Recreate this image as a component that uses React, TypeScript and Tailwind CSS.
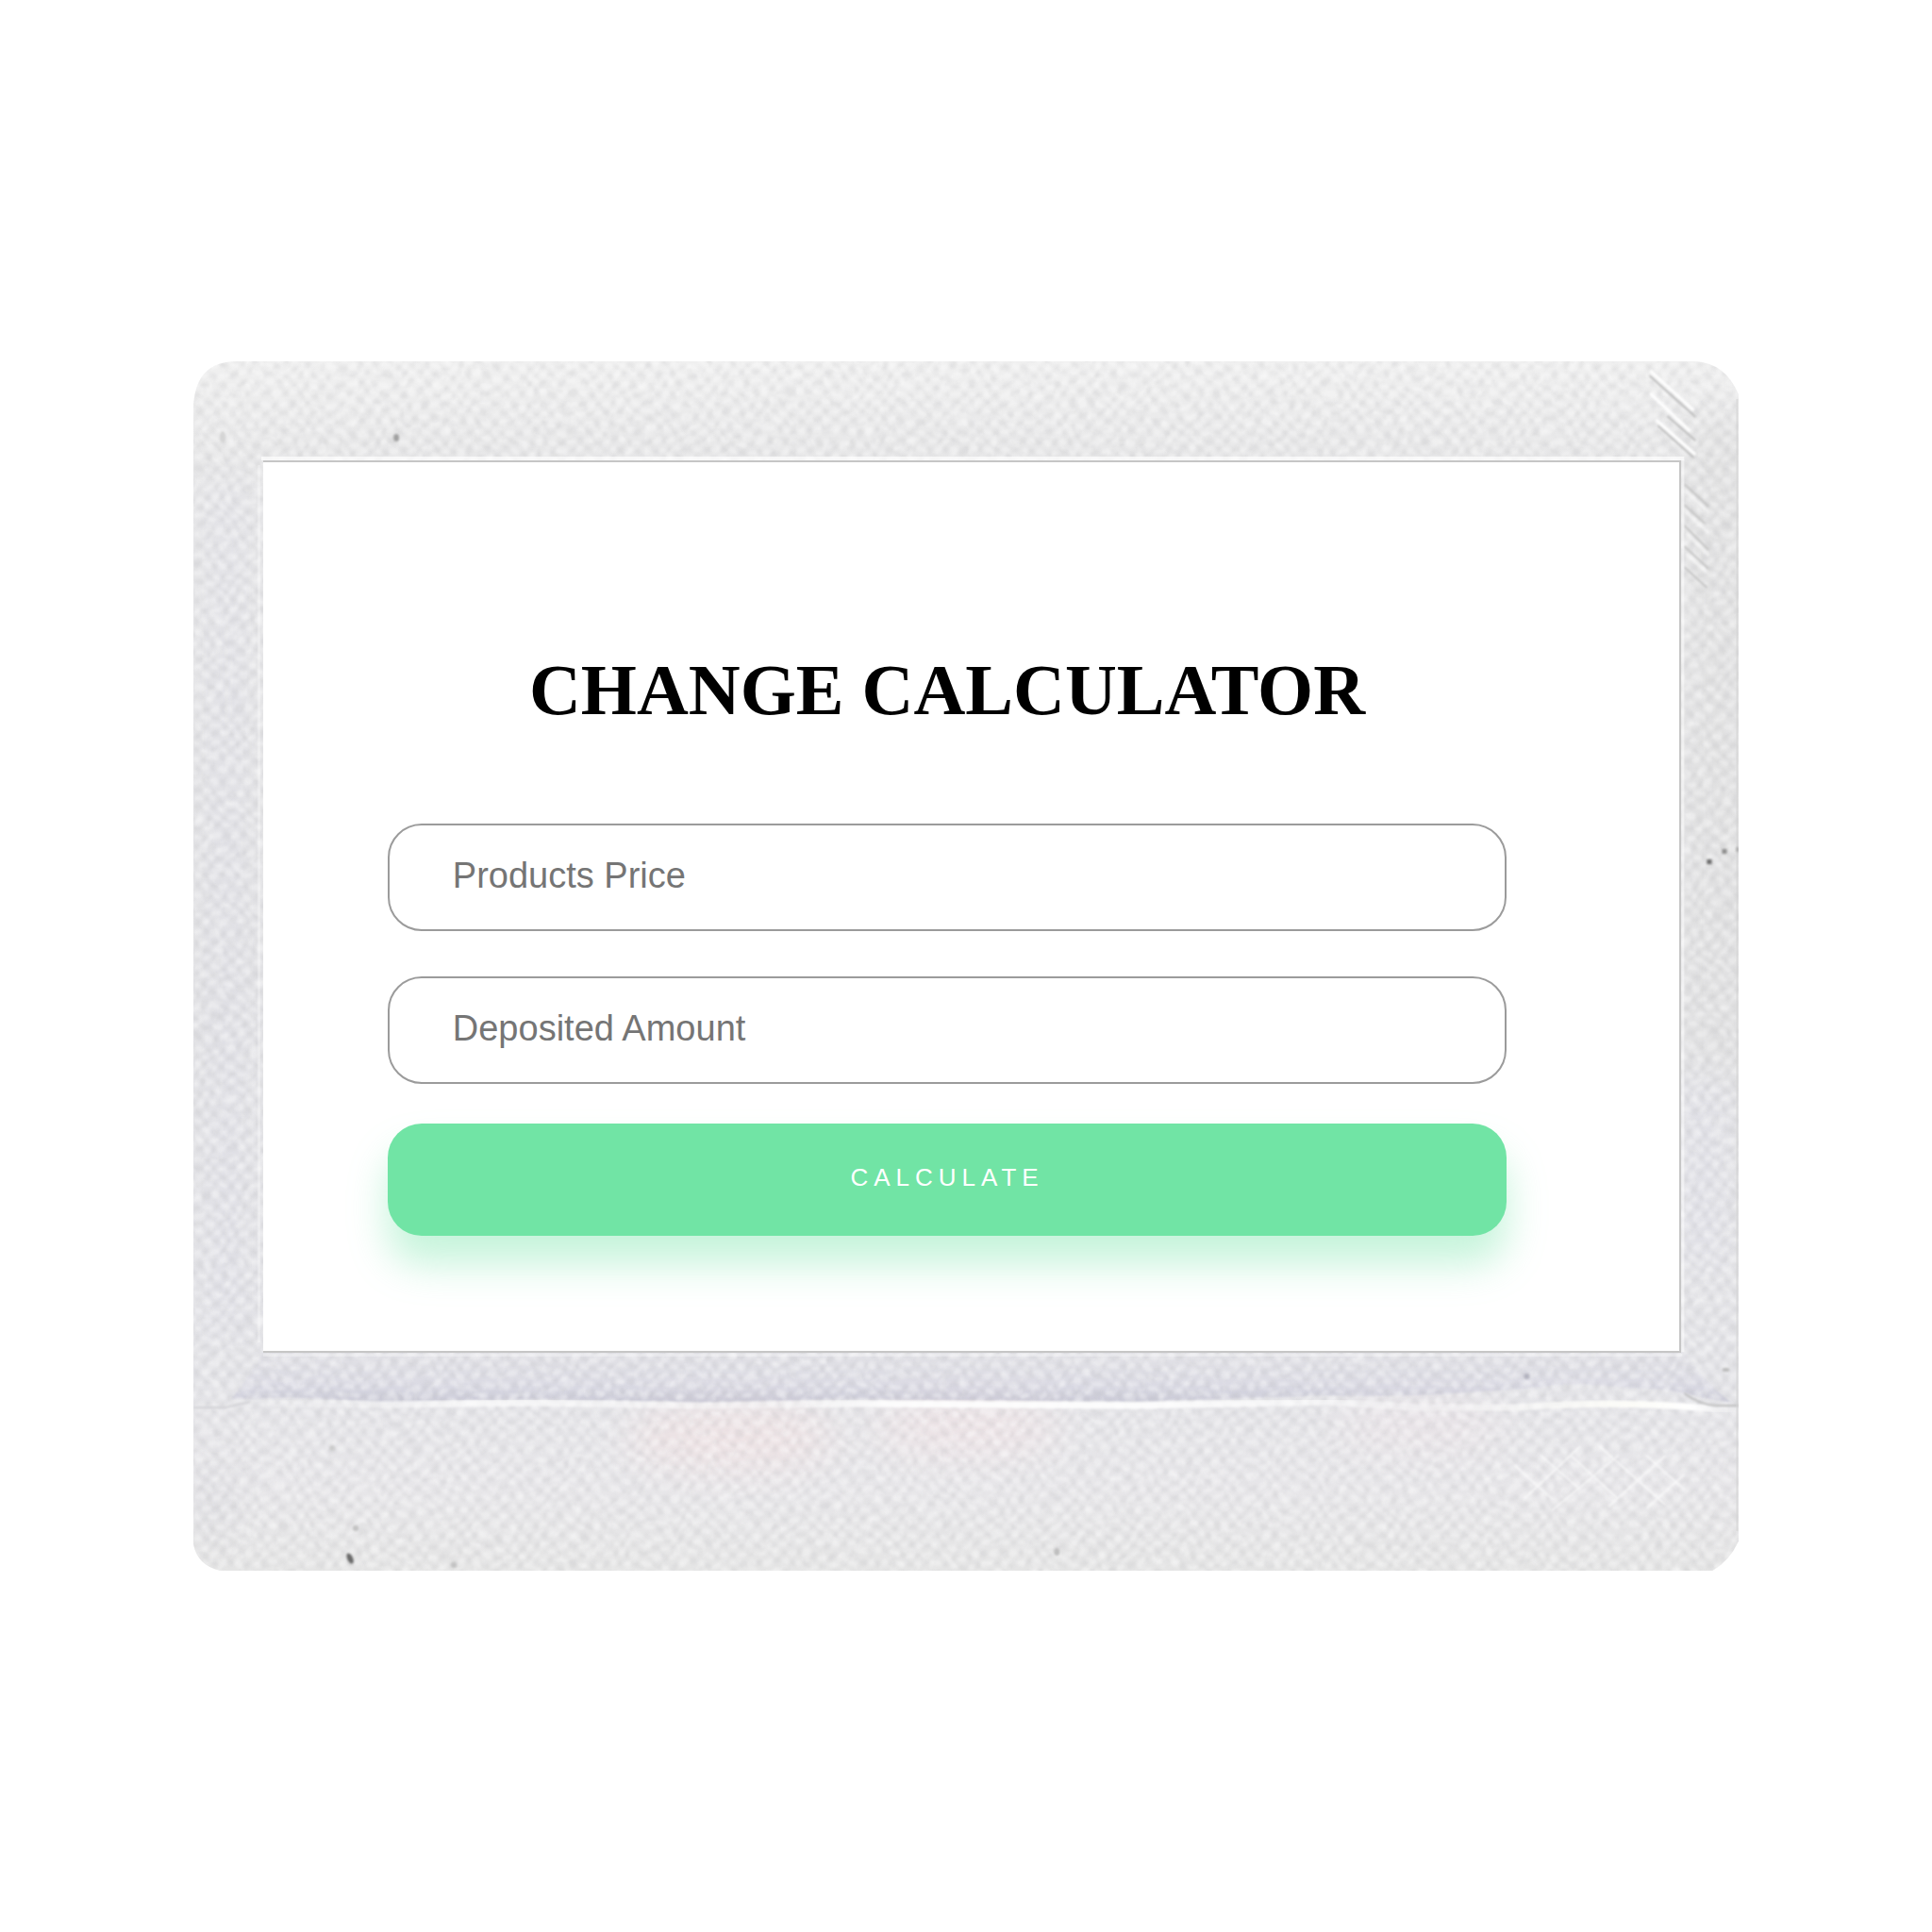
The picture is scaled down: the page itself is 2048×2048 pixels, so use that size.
import { useState } from "react";
import type { FormEvent } from "react";

function PaperFrame() {
  return (
    <svg
      aria-hidden="true"
      className="absolute inset-0 h-full w-full"
      viewBox="0 0 1638 1282"
      preserveAspectRatio="none"
    >
      <defs>
        <clipPath id="frame-shape">
          <path d="M0 48 Q2 0 46 0 H1592 Q1624 2 1638 36 V1250 Q1628 1272 1610 1282 H28 Q4 1276 0 1254 Z" />
        </clipPath>
        <linearGradient id="base" x1="0" y1="0" x2="0" y2="1">
          <stop offset="0" stopColor="#f0f0f0" />
          <stop offset="0.08" stopColor="#e7e7e8" />
          <stop offset="0.5" stopColor="#e2e2e4" />
          <stop offset="0.84" stopColor="#e3e3e7" />
          <stop offset="0.93" stopColor="#e7e6e9" />
          <stop offset="1" stopColor="#e5e5e5" />
        </linearGradient>
        <linearGradient id="fold-shade" x1="0" y1="0" x2="0" y2="1">
          <stop offset="0" stopColor="#d0cfdc" stopOpacity="0.1" />
          <stop offset="0.6" stopColor="#d0cfe0" stopOpacity="0.4" />
          <stop offset="1" stopColor="#bfbfcf" stopOpacity="0.75" />
        </linearGradient>
        <linearGradient id="fold-light" x1="0" y1="0" x2="1" y2="0">
          <stop offset="0" stopColor="#fff" stopOpacity="0" />
          <stop offset="0.1" stopColor="#fff" stopOpacity="0.3" />
          <stop offset="0.18" stopColor="#fff" stopOpacity="0.7" />
          <stop offset="0.38" stopColor="#fff" stopOpacity="0.35" />
          <stop offset="0.45" stopColor="#fff" stopOpacity="0.9" />
          <stop offset="0.62" stopColor="#fff" stopOpacity="0.9" />
          <stop offset="0.8" stopColor="#fff" stopOpacity="0.3" />
          <stop offset="0.93" stopColor="#fffffa" stopOpacity="0.9" />
          <stop offset="0.97" stopColor="#fff" />
          <stop offset="1" stopColor="#fff" stopOpacity="0" />
        </linearGradient>
        <pattern id="weave" width="18" height="20" patternUnits="userSpaceOnUse">
          <ellipse cx="5" cy="5" rx="5" ry="3" fill="#fff" fillOpacity="0.7" />
          <ellipse cx="14" cy="15" rx="5" ry="3" fill="#fff" fillOpacity="0.7" />
          <ellipse cx="14" cy="5" rx="4" ry="3" fill="#b8b8bc" fillOpacity="0.4" />
          <ellipse cx="5" cy="15" rx="4" ry="3" fill="#b8b8bc" fillOpacity="0.4" />
        </pattern>
        <filter id="warp" x="0" y="0" width="100%" height="100%">
          <feTurbulence type="fractalNoise" baseFrequency="0.025" numOctaves="2" seed="4" result="n" />
          <feDisplacementMap in="SourceGraphic" in2="n" scale="20" xChannelSelector="R" yChannelSelector="G" />
          <feGaussianBlur stdDeviation="1.5" />
        </filter>
        <filter id="grain-light" x="0" y="0" width="100%" height="100%">
          <feTurbulence type="fractalNoise" baseFrequency="0.09" numOctaves="2" seed="9" />
          <feColorMatrix values="0 0 0 0 1  0 0 0 0 1  0 0 0 0 1  2.2 0 0 0 -1.05" />
        </filter>
        <filter id="grain-dark" x="0" y="0" width="100%" height="100%">
          <feTurbulence type="fractalNoise" baseFrequency="0.1" numOctaves="2" seed="21" />
          <feColorMatrix values="0 0 0 0 0.55  0 0 0 0 0.55  0 0 0 0 0.57  1.6 0 0 0 -0.8" />
        </filter>
        <filter id="soft" x="-50%" y="-50%" width="200%" height="200%">
          <feGaussianBlur stdDeviation="20" />
        </filter>
        <filter id="hair" x="-20%" y="-20%" width="140%" height="140%">
          <feGaussianBlur stdDeviation="1" />
        </filter>
      </defs>

      <g clipPath="url(#frame-shape)">
        <rect width="1638" height="1282" fill="url(#base)" />

        <g filter="url(#soft)">
          <rect x="20" y="130" width="30" height="900" fill="#dedee8" fillOpacity="0.6" />
          <rect x="1590" y="60" width="48" height="700" fill="#dedede" fillOpacity="0.8" />
          <rect x="1576" y="760" width="40" height="200" fill="#ddddea" fillOpacity="0.5" />
          <rect x="0" y="1180" width="44" height="60" fill="#dcdcdf" fillOpacity="0.7" />
          <ellipse cx="570" cy="1140" rx="110" ry="34" fill="#f0e2e4" fillOpacity="0.8" />
          <ellipse cx="820" cy="1130" rx="100" ry="28" fill="#f0e3e6" fillOpacity="0.8" />
          <ellipse cx="1300" cy="1130" rx="90" ry="24" fill="#ede4e8" fillOpacity="0.7" />
        </g>

        <path
          d="M40 1100 Q66 1070 72 1050 H1580 Q1600 1082 1630 1104 L1560 1090 L1460 1084 Q1300 1100 1200 1096 L1000 1103 L700 1100 L540 1104 L360 1100 L200 1103 L100 1098 Z"
          fill="url(#fold-shade)"
          filter="url(#hair)"
        />

        <rect x="-20" y="-20" width="1678" height="1322" fill="url(#weave)" opacity="0.45" filter="url(#warp)" />
        <rect width="1638" height="1282" filter="url(#grain-light)" opacity="0.35" />
        <rect width="1638" height="1282" filter="url(#grain-dark)" opacity="0.22" />

        <path
          d="M0 1110 L60 1104 L200 1106 L360 1104 L540 1107 L700 1105 L1000 1107 L1200 1103 L1300 1109 L1400 1109 Q1500 1102 1580 1108 L1638 1112"
          fill="none"
          stroke="url(#fold-light)"
          strokeWidth="7"
          filter="url(#hair)"
        />
        <path d="M1580 1094 Q1596 1106 1614 1107 H1638" fill="none" stroke="#bdbdbd" strokeWidth="2" filter="url(#hair)" />
        <path d="M0 1109 H34 L60 1103" fill="none" stroke="#d2d2d6" strokeWidth="2" filter="url(#hair)" />

        <g fill="none" strokeWidth="3" filter="url(#hair)">
          <path
            stroke="#fff"
            d="M1544 10 L1590 52 M1544 34 L1586 74 M1550 62 L1592 99"
          />
          <path
            stroke="#fff"
            strokeOpacity="0.5"
            d="M1582 138 L1606 160 M1582 160 L1606 182 M1582 182 L1606 206 M1582 204 L1604 224"
          />
          <path
            stroke="#bcbcbc"
            strokeWidth="2"
            d="M1543 15 L1592 59 M1562 58 L1592 84 M1552 68 L1590 102"
          />
          <path
            stroke="#c4c4c4"
            strokeWidth="2"
            d="M1580 130 L1606 154 M1580 152 L1602 172 M1580 174 L1606 200 M1580 196 L1606 220 M1580 218 L1604 240"
          />
          <path
            stroke="#fff"
            strokeWidth="2"
            strokeOpacity="0.6"
            d="M1428 1160 L1470 1196 M1460 1160 L1510 1206 M1490 1150 L1560 1212 M1560 1160 L1500 1214 M1510 1160 L1440 1218 M1470 1150 L1410 1206 M1580 1180 L1540 1216 M1540 1160 L1580 1196 M1400 1170 L1440 1206"
          />
        </g>

        <rect x="1635" y="40" width="2" height="1200" fill="#d2d2d2" fillOpacity="0.6" />
        <rect x="72" y="101" width="1508" height="4" fill="#fff" fillOpacity="0.7" />
        <rect x="1577" y="104" width="3" height="946" fill="#fff" fillOpacity="0.5" />
        <rect x="74" y="1052" width="1504" height="3" fill="#fff" fillOpacity="0.3" />
        <rect x="68" y="110" width="3" height="930" fill="#fff" fillOpacity="0.3" />

        <g filter="url(#hair)">
          <ellipse cx="215" cy="81" rx="3" ry="4" fill="#a0a0a0" />
          <ellipse cx="31" cy="80" rx="3" ry="6" fill="#d4d4d4" />
          <rect x="1604" y="528" width="5" height="5" fill="#6e6e6e" />
          <rect x="1620" y="517" width="5" height="5" fill="#8f8f8f" />
          <rect x="1635" y="515" width="3" height="5" fill="#ababab" />
          <ellipse cx="166" cy="1269" rx="3" ry="6" transform="rotate(-25 166 1269)" fill="#6a6a6a" />
          <ellipse cx="172" cy="1237" rx="3" ry="3" fill="#c2c2c2" />
          <ellipse cx="147" cy="1152" rx="3" ry="3" fill="#cccccc" />
          <ellipse cx="276" cy="1276" rx="3" ry="3" fill="#c2c2c2" />
          <ellipse cx="915" cy="1262" rx="3" ry="4" fill="#bebebe" />
          <ellipse cx="1413" cy="1076" rx="3" ry="3" fill="#b4b4c0" />
          <ellipse cx="1624" cy="1069" rx="4" ry="2" fill="#bcbcbc" />
        </g>
      </g>
    </svg>
  );
}

type FieldProps = {
  name: string;
  label: string;
  value: string;
  onChange: (value: string) => void;
};

function Field({ name, label, value, onChange }: FieldProps) {
  return (
    <input
      type="text"
      inputMode="decimal"
      name={name}
      aria-label={label}
      placeholder={label}
      value={value}
      onChange={(event) => onChange(event.target.value)}
      className="h-[114px] w-full rounded-[36px] border-2 border-[#9b9b9b] bg-white px-[67px] pb-1 font-['Liberation_Sans',Arial,sans-serif] text-[38px] text-black outline-none placeholder:text-[#757575]"
    />
  );
}

export default function App() {
  const [price, setPrice] = useState("");
  const [deposit, setDeposit] = useState("");
  const [change, setChange] = useState<number | null>(null);

  const calculate = (event: FormEvent) => {
    event.preventDefault();
    const result = Number(deposit) - Number(price);
    setChange(Number.isFinite(result) ? result : null);
  };

  return (
    <main className="flex min-h-screen items-center justify-center bg-white">
      <section className="relative w-4/5 pt-[105px] pr-[61px] pb-[231px] pl-[74px]">
        <PaperFrame />
        <div className="relative border-t-2 border-r-2 border-b-2 border-[#c6c6c6] bg-white pt-[197px] pr-[183px] pb-[122px] pl-[132px]">
          <h1 className="text-center font-['Liberation_Serif','Times_New_Roman',serif] text-[76px] leading-[88px] font-bold whitespace-nowrap text-black">
            CHANGE CALCULATOR
          </h1>
          <form onSubmit={calculate} className="mt-[98px] flex flex-col">
            <div className="flex flex-col gap-12">
              <Field name="price" label="Products Price" value={price} onChange={setPrice} />
              <Field name="deposit" label="Deposited Amount" value={deposit} onChange={setDeposit} />
            </div>
            <button
              type="submit"
              className="mt-[42px] h-[119px] w-full cursor-pointer rounded-[36px] bg-[#71e4a5] pb-1 font-['Liberation_Sans',Arial,sans-serif] text-[26px] tracking-[6px] text-white uppercase shadow-[0_30px_40px_rgba(113,228,165,0.4)]"
            >
              Calculate
            </button>
            {change !== null && (
              <output className="mt-12 text-center font-['Liberation_Sans',Arial,sans-serif] text-[38px]">
                {change.toFixed(2)}
              </output>
            )}
          </form>
        </div>
      </section>
    </main>
  );
}
